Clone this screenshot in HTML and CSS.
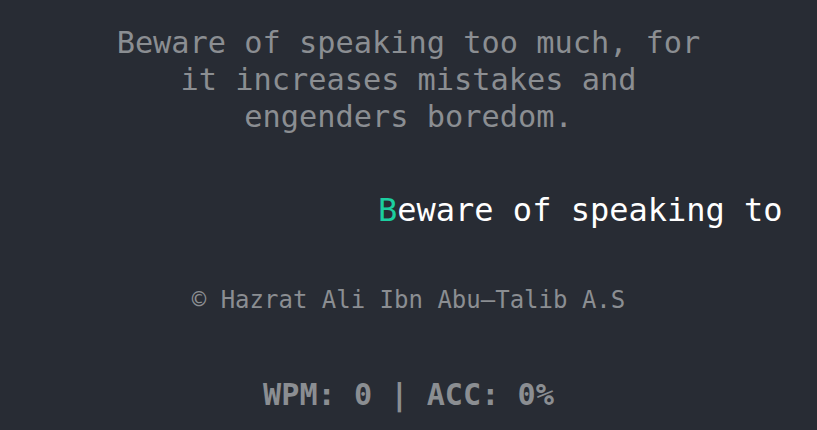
FILE: index.html
```html
<!DOCTYPE html>
<html lang="en">
<head>
<meta charset="utf-8">
<title>Typing</title>
<link rel="stylesheet" href="styles.css">
</head>
<body>
<main class="app">
  <p class="quote">Beware of speaking too much, for it increases mistakes and engenders boredom.</p>
  <div class="typing"><span class="current">B</span><span class="rest">eware of speaking to</span></div>
  <p class="author">© Hazrat Ali Ibn Abu–Talib A.S</p>
  <p class="stats">WPM: 0 | ACC: 0%</p>
</main>
</body>
</html>
```
FILE: styles.css
```css
html, body {
  margin: 0;
  padding: 0;
  background: #282c34;
  height: 100%;
  overflow: hidden;
}
.app {
  display: flex;
  flex-direction: column;
  align-items: center;
  font-family: "DejaVu Sans Mono", monospace;
  padding-top: 24px;
}
.quote {
  margin: 0;
  max-width: 600px;
  text-align: center;
  font-size: 30.3px;
  line-height: 37px;
  color: #8b8e92;
}
.typing {
  align-self: stretch;
  margin: 55px 0 0;
  padding-left: 378px;
  white-space: nowrap;
  font-size: 32px;
  line-height: 40px;
  color: #ffffff;
}
.current {
  color: #1ccfa0;
}
.author {
  margin: 55px 0 0;
  font-size: 24px;
  line-height: 30px;
  color: #8b8e92;
}
.stats {
  margin: 61px 0 0;
  font-size: 30.2px;
  line-height: 37px;
  font-weight: bold;
  color: #8b8e92;
}
```
